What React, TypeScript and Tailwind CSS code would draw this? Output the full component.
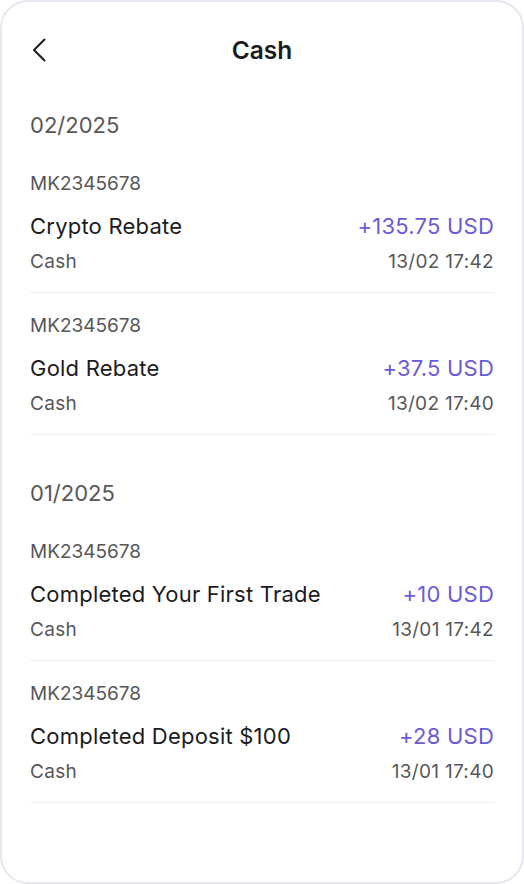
import React from 'react';

type Txn = {
  ref: string;
  title: string;
  amount: string;
  account: string;
  time: string;
};

type Group = {
  month: string;
  items: Txn[];
};

const groups: Group[] = [
  {
    month: '02/2025',
    items: [
      { ref: 'MK2345678', title: 'Crypto Rebate', amount: '+135.75 USD', account: 'Cash', time: '13/02 17:42' },
      { ref: 'MK2345678', title: 'Gold Rebate', amount: '+37.5 USD', account: 'Cash', time: '13/02 17:40' },
    ],
  },
  {
    month: '01/2025',
    items: [
      { ref: 'MK2345678', title: 'Completed Your First Trade', amount: '+10 USD', account: 'Cash', time: '13/01 17:42' },
      { ref: 'MK2345678', title: 'Completed Deposit $100', amount: '+28 USD', account: 'Cash', time: '13/01 17:40' },
    ],
  },
];

function TxnRow({ txn }: { txn: Txn }) {
  return (
    <div className="pt-[21px] pb-[18px] border-b border-[#efeff2]">
      <div className="text-[19px] leading-[24px] text-[#575757]">{txn.ref}</div>
      <div className="mt-[16px] flex justify-between items-center text-[22px] leading-[28px] tracking-[0.22px]">
        <span className="text-[#1c1c1e]">{txn.title}</span>
        <span className="text-[#6b5bd8]">{txn.amount}</span>
      </div>
      <div className="mt-[10px] flex justify-between items-center text-[19px] leading-[24px] tracking-[0.3px] text-[#575757]">
        <span>{txn.account}</span>
        <span>{txn.time}</span>
      </div>
    </div>
  );
}

function App() {
  return (
    <div
      className="w-[524px] h-[884px] bg-white border-2 border-[#e6e6ef] rounded-[28px] overflow-hidden"
      style={{ fontFamily: 'Inter, "Noto Sans", sans-serif' }}
    >
      <div className="relative h-[94px] flex items-center justify-center">
        <button className="absolute left-[24px] top-[31px] w-[28px] h-[32px]">
          <svg width="28" height="32" viewBox="0 0 28 32" fill="none">
            <path d="M18.5 6.5 L8 17 L18.5 27.5" stroke="#1c1c1e" strokeWidth="2" strokeLinecap="round" strokeLinejoin="round" />
          </svg>
        </button>
        <h1 className="mt-[2px] text-[24.5px] leading-[30px] font-semibold text-[#1c1c1e]">Cash</h1>
      </div>

      <div className="px-[28px]">
        {groups.map((g, i) => (
          <div key={g.month} className={i === 0 ? 'mt-[15px]' : 'mt-[44px]'}>
            <div className="mb-[12px] text-[22px] leading-[28px] text-[#575757]">{g.month}</div>
            {g.items.map((t, j) => (
              <TxnRow key={j} txn={t} />
            ))}
          </div>
        ))}
      </div>
    </div>
  );
}

export default App;
